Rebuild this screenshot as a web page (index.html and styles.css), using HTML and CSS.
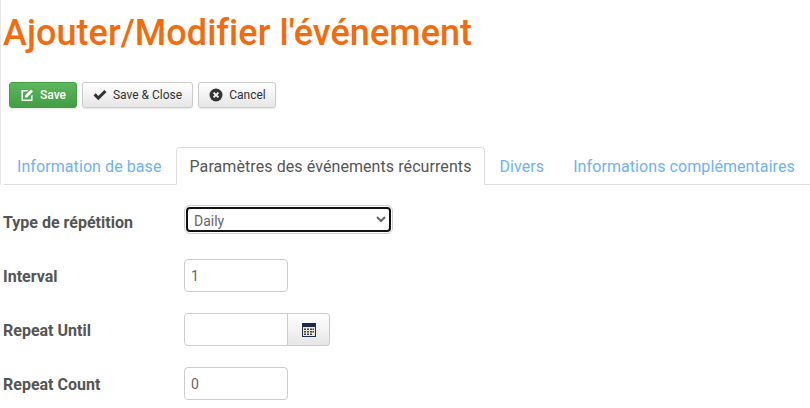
FILE: index.html
```html
<!DOCTYPE html>
<html lang="fr">
<head>
    <meta charset="UTF-8">
    <meta name="viewport" content="width=device-width, initial-scale=1.0">
    <title>Ajouter/Modifier l'événement</title>
    <link rel="stylesheet" href="styles.css">
</head>
<body>
    <div class="header">
        <h1>Ajouter/Modifier l'événement</h1>

        <div class="toolbar">
            <button class="btn btn-save">
                <svg class="icon" viewBox="0 0 14 14"><path d="M1.500 2H8.500L7 3.500H3v8h8V8l1.500-1.500V13H1.500z" fill="currentColor"/><path d="M5 7.500L11 1.500l2 2L7 9.500H5z" fill="currentColor"/></svg>
                Save
            </button>
            <button class="btn">
                <svg class="icon" viewBox="0 0 14 14"><path d="M0.500 7.500l2.200-2.200 2.600 2.600 6-6 2.200 2.200-8.200 8.200z" fill="currentColor"/></svg>
                Save &amp; Close
            </button>
            <button class="btn btn-cancel">
                <svg class="icon" viewBox="0 0 14 14"><circle cx="7" cy="7" r="6.500" fill="currentColor"/><path d="M4.600 4.600l4.800 4.800M9.400 4.600l-4.800 4.800" stroke="#f2f2f2" stroke-width="2"/></svg>
                Cancel
            </button>
        </div>

        <ul class="tabs">
            <li><a href="#">Information de base</a></li>
            <li class="active"><a href="#">Paramètres des événements récurrents</a></li>
            <li><a href="#">Divers</a></li>
            <li><a href="#">Informations complémentaires</a></li>
        </ul>
    </div>

    <div class="form">
        <div class="form-row row-select">
            <label>Type de répétition</label>
            <select class="select-focus">
                <option>Daily</option>
            </select>
        </div>
        <div class="form-row">
            <label>Interval</label>
            <input type="text" value="1">
        </div>
        <div class="form-row">
            <label>Repeat Until</label>
            <div class="input-group">
                <input type="text" value="">
                <span class="add-on">
                    <svg width="14" height="14" viewBox="0 0 14 14"><rect x="0.500" y="0.500" width="13" height="13" fill="#eee9da" stroke="#1f2a44"/><rect x="0" y="0" width="14" height="4" fill="#1f2a44"/><path d="M2 5.500h2V7H2zM5 5.500h2V7H5zM8 5.500h2V7H8zM10.500 5.500H12V7h-1.500zM2 8h2v1.500H2zM5 8h2v1.500H5zM8 8h2v1.500H8zM10.500 8H12v1.500h-1.500zM2 10.500h2V12H2zM5 10.500h2V12H5zM8 10.500h2V12H8z" fill="#3a3f4f"/></svg>
                </span>
            </div>
        </div>
        <div class="form-row">
            <label>Repeat Count</label>
            <input type="text" value="0">
        </div>
    </div>
</body>
</html>
```

FILE: styles.css
```css
* {
    box-sizing: border-box;
}

body {
    margin: 0;
    height: 408px;
    background-color: #fff;
    color: #555;
    font-family: Roboto, "Liberation Sans", sans-serif;
    font-size: 14px;
    overflow: hidden;
}

.header {
    padding-left: 3px;
    border-left: 1px solid #e8e8e8;
}

.form {
    padding-left: 3px;
}

h1 {
    margin: 0 0 0 -1px;
    padding-top: 12px;
    height: 82px;
    font-size: 36px;
    line-height: 42px;
    font-weight: 500;
    letter-spacing: 0.05px;
    color: #f26c0d;
}

.toolbar {
    display: flex;
    gap: 5px;
    padding-left: 5px;
}

.btn {
    display: flex;
    align-items: center;
    gap: 6px;
    height: 26px;
    padding: 0 10px;
    font-family: inherit;
    font-size: 12px;
    color: #333;
    background: linear-gradient(#fff, #e6e6e6);
    border: 1px solid #ccc;
    border-radius: 3px;
    box-shadow: 0 1px 2px rgba(0, 0, 0, 0.1);
}

.btn-cancel {
    padding-right: 9px;
}

.btn-save {
    color: #fff;
    font-weight: 500;
    background: linear-gradient(#5cb85c, #449d44);
    border-color: #449d44;
}

.icon {
    width: 14px;
    height: 14px;
}

.tabs {
    display: flex;
    list-style: none;
    margin: 39px 0 0;
    padding: 0;
    height: 38px;
    border-bottom: 1px solid #ddd;
}

.tabs li {
    margin-bottom: -1px;
}

.tabs a {
    display: block;
    height: 38px;
    padding: 0 13px 0 14px;
    line-height: 38px;
    font-size: 16px;
    letter-spacing: 0.08px;
    color: #6fb1f8;
    text-decoration: none;
    border: 1px solid transparent;
}

.tabs li:first-child a {
    padding-left: 12px;
}

.tabs .active a {
    color: #555;
    background-color: #fff;
    border-color: #ddd;
    border-bottom-color: #fff;
    border-radius: 4px 4px 0 0;
    padding: 0 12px 0 13px;
}

.form-row {
    display: flex;
    align-items: center;
    margin-bottom: 21px;
}

.row-select {
    margin-top: 20px;
    margin-bottom: 25px;
}

label {
    width: 181px;
    padding-top: 2px;
    font-size: 16px;
    font-weight: 700;
    color: #555;
}

.row-select label {
    padding-top: 6px;
}

input,
select {
    font-family: inherit;
    font-size: 14px;
    color: #666;
    background-color: #fff;
    border: 1px solid #ccc;
    border-radius: 4px;
}

input {
    width: 104px;
    height: 33px;
    padding: 0 6px;
}

.select-focus {
    border: 2px solid #111;
    outline: 1px solid #ccc;
    outline-offset: 1px;
    height: 25px;
    width: 205px;
    margin: 2px;
    padding: 2px 1px 0 2px;
}

.input-group {
    display: flex;
}

.input-group input {
    border-radius: 4px 0 0 4px;
}

.add-on {
    display: flex;
    align-items: center;
    justify-content: center;
    width: 42px;
    height: 33px;
    background: linear-gradient(#fff, #e6e6e6);
    border: 1px solid #ccc;
    border-left: 0;
    border-radius: 0 4px 4px 0;
}
```
